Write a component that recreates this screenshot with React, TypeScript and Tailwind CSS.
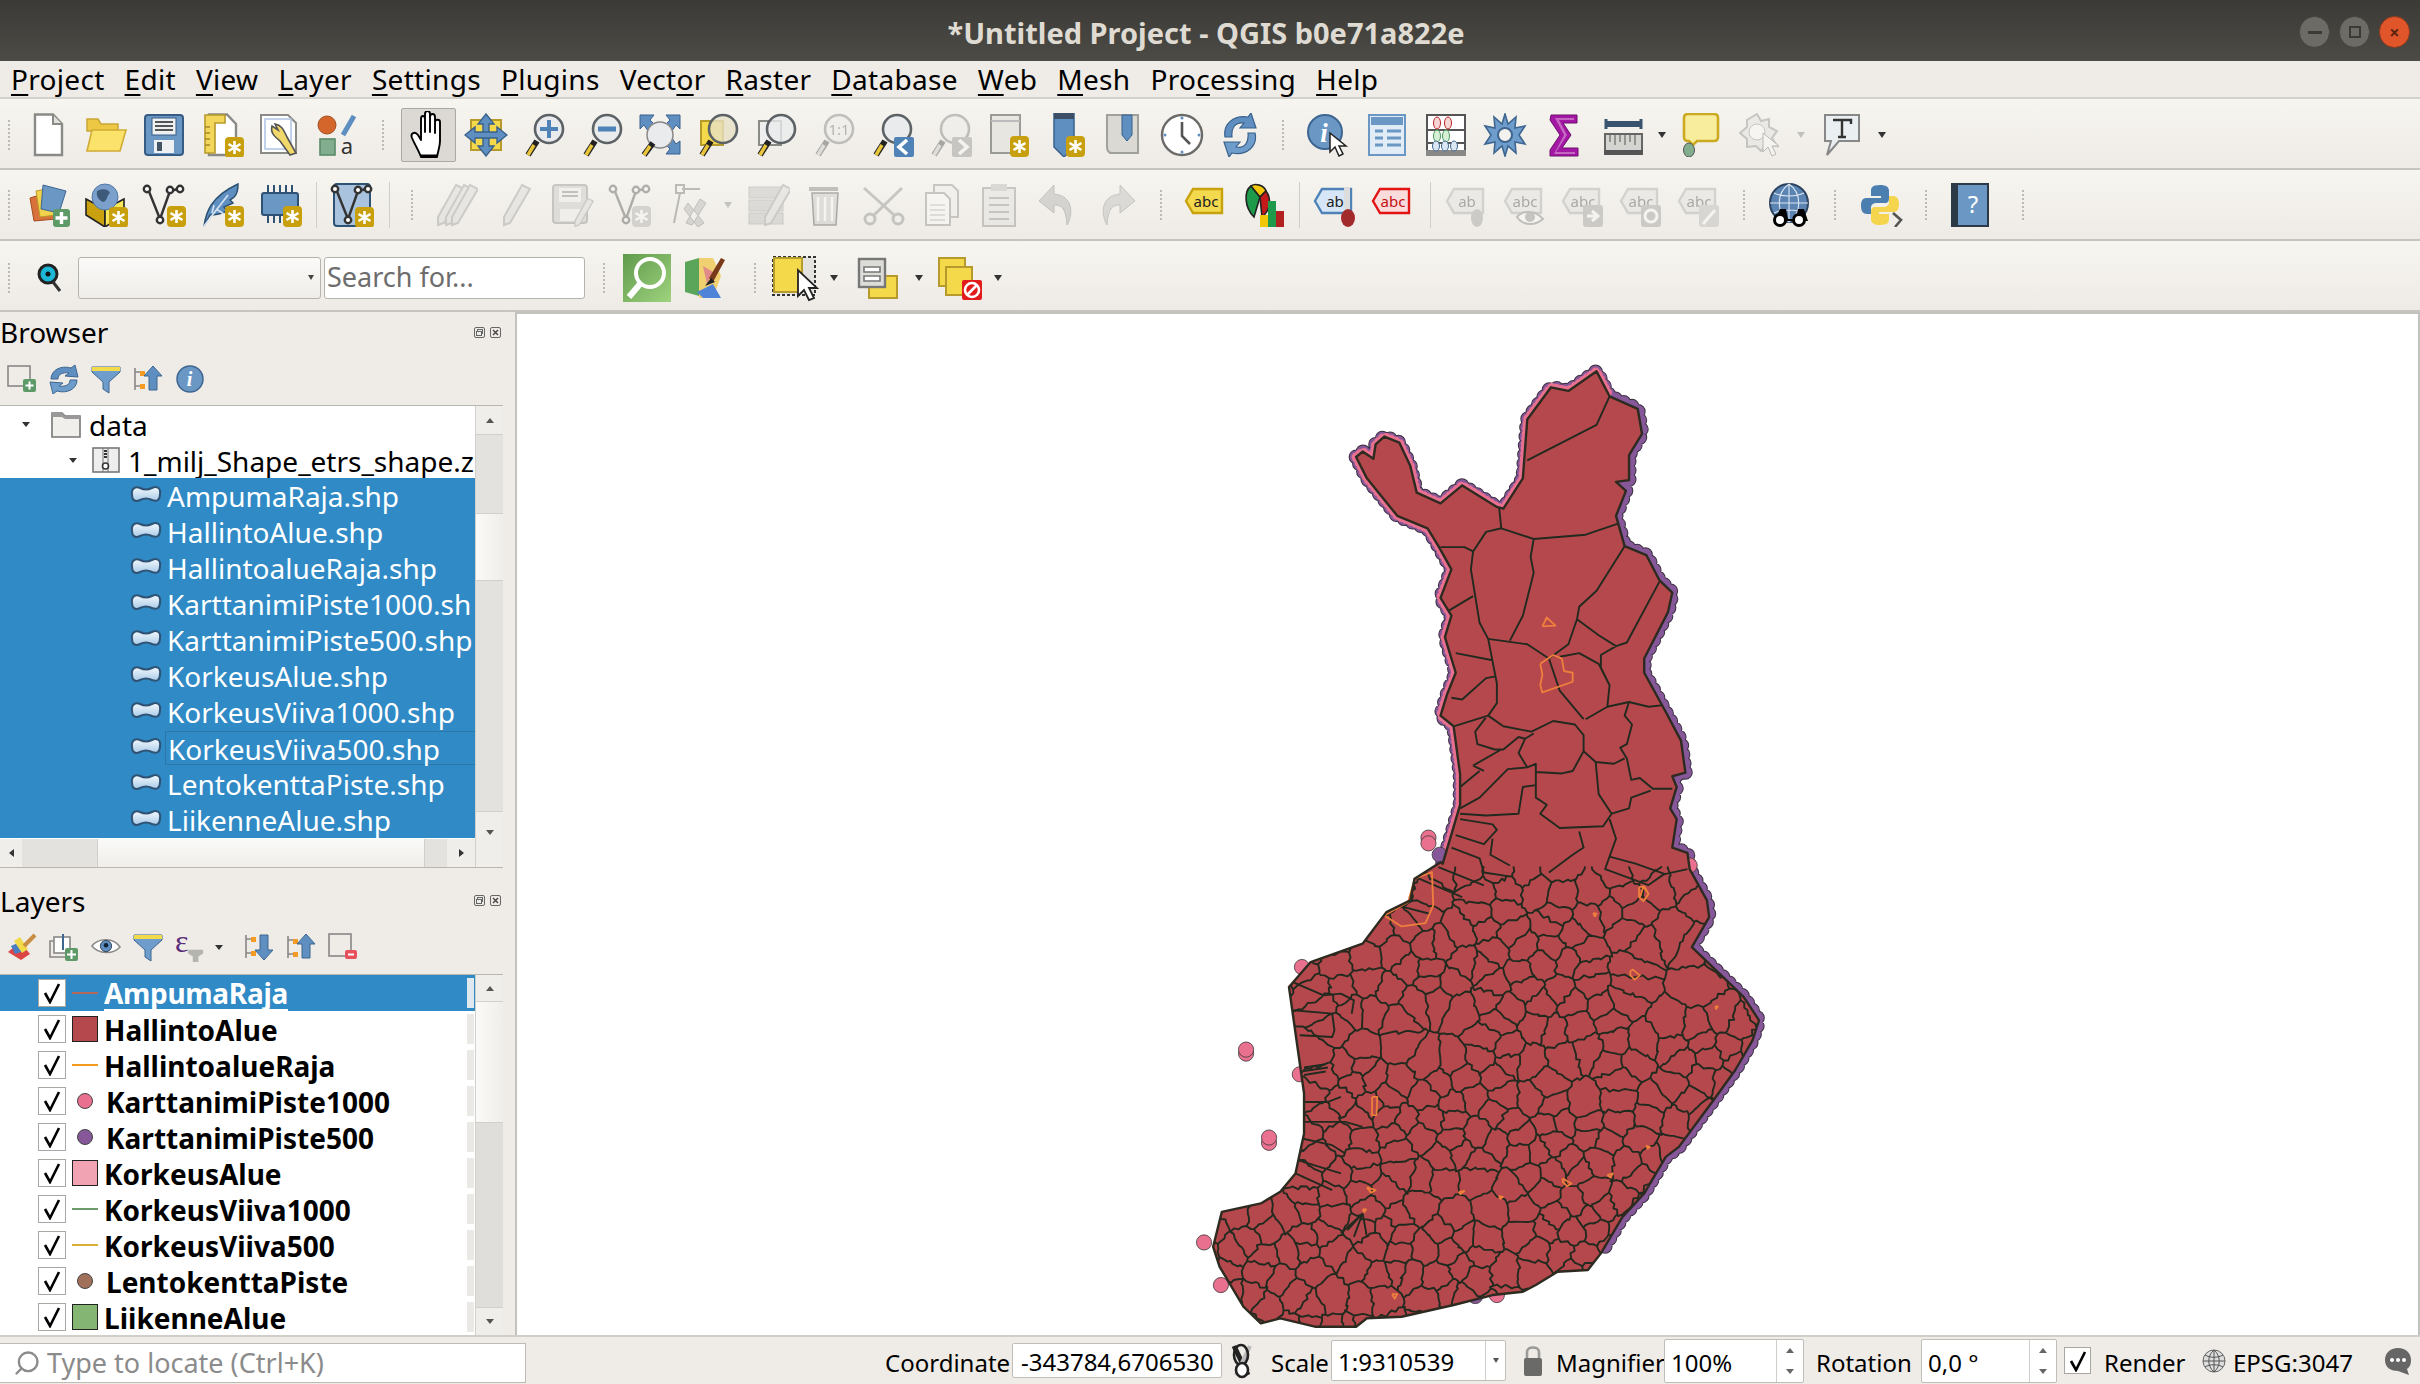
import { Search } from 'lucide-react'
import type { ReactNode } from 'react'

type Pt = [number, number]

// map traces were read off two zoomed crops, these put them back on page coordinates
const z6 = (x: number, y: number): Pt => [1150 + x / 2.306, 340 + y / 2.8]
const z7 = (x: number, y: number): Pt => [1150 + x / 2.306, 840 + y / 3]
const pts6 = (a: number[]) => { const o: Pt[] = []; for (let i = 0; i < a.length; i += 2) o.push(z6(a[i], a[i + 1])); return o }
const pts7 = (a: number[]) => { const o: Pt[] = []; for (let i = 0; i < a.length; i += 2) o.push(z7(a[i], a[i + 1])); return o }
const toD = (p: Pt[], close = false) => 'M' + p.map(q => q[0].toFixed(1) + ' ' + q[1].toFixed(1)).join('L') + (close ? 'Z' : '')

const coastNorthEast = [
  ...pts6([475,325,490,310,515,330,520,290,540,268,575,285,600,350,615,425,670,455,720,405,800,465,815,470,860,385,870,220,925,130,965,140,1030,85,1060,155,1125,190,1135,260,1105,320,1105,390,1075,395,1098,420,1075,490,1095,575,1145,600,1175,670,1205,705,1195,760,1140,890,1140,930,1190,1040,1225,1120,1235,1210,1205,1220,1215,1250,1200,1310,1215,1340,1205,1420,1240,1435,1245,1480]),
  ...pts7([1285,180,1290,230,1250,320,1330,420,1370,470,1405,540,1390,600,1350,690,1300,780,1220,920,1190,950,1140,1060,1090,1130,1040,1240]),
]
const coastSouth = pts7([1010,1290,940,1295,890,1335,860,1355,790,1365,700,1395,580,1430,500,1435,475,1460,380,1460,300,1435,255,1450,215,1400,160,1280,145,1220,165,1115,255,1090,300,1055,335,1000,355,880,355,760,320,440,370,365,490,310,545,215,600,180,610,115,670,65])
const coastWest = pts6([675,1465,715,1300,715,1215,700,1080,670,1050,685,990,705,930,680,830,695,770,670,720,695,640,665,575,640,525,570,490,500,385,475,325])
const outline = toD([...coastNorthEast, ...coastSouth, ...coastWest], true)

const northLines = [
  [870,335,1030,235,1060,155],
  [805,465,810,525,885,555,1005,543,1080,512],
  [810,525,775,535,745,590,725,578,670,578],
  [885,555,878,605,885,650,860,770,830,840],
  [745,590,740,640,760,790,780,835,800,960,800,1015,780,1050,700,1080],
  [780,835,870,850,920,890,945,980,1000,1060],
  [1095,575,1030,700,990,745,985,780,965,850,920,890],
  [985,780,1035,825,1075,855,1100,845,1175,675],
  [945,885,990,875,1035,905,1060,965,1055,1025],
  [1075,855,1040,880,1040,915,1060,965],
  [1055,1025,1105,1012,1150,1025,1190,1020],
  [1005,1060,1055,1025],
  [690,755,745,715],
  [705,875,790,895],
  [695,1000,720,1005,775,945,797,940],
  [780,1050,815,1080,880,1095,930,1065,980,1075,1000,1105,1000,1150,975,1205,950,1212,890,1208],
  [1105,1012,1095,1050,1112,1075,1100,1130,1085,1140,1100,1170,1110,1230,1130,1225,1160,1255,1205,1255],
  [1000,1150,1028,1180,1070,1185,1095,1170],
  [1028,1180,1035,1270,1065,1325,1105,1310,1110,1280,1155,1260],
  [775,1055,750,1095,755,1130,795,1145,815,1145,850,1110,865,1115,885,1100],
  [865,1115,850,1155,870,1195,890,1185,890,1280,915,1300,900,1325,945,1365,1045,1360,1065,1325],
  [745,1190,810,1145],
  [870,1195,825,1200,760,1280,715,1310],
  [760,1205,715,1250],
  [745,1190,770,1205],
  [715,1325,775,1330,850,1325,860,1250,890,1245],
  [715,1340,790,1355,800,1370,770,1410,705,1385],
  [1060,1340,1075,1395,1060,1445,1120,1465,1190,1495],
  [990,1375,1000,1420,975,1440,920,1490],
  [1060,1445,1050,1480,1150,1525,1185,1495,1240,1480],
  [695,1420,760,1450,770,1490,825,1500],
  [790,1395,785,1440,830,1470],
].map(l => toD(pts6(l))).join('')

const southLines = [
  [320,420,400,465,440,460,470,480,465,520],
  [330,510,420,520,425,570,420,590,345,585],
  [355,682,405,672],[355,692,410,682],[355,704,405,694],
  [355,785,410,785,440,770],
  [355,845,450,845,490,860],
  [350,895,420,915,450,940],
  [340,960,440,1000],
  [335,1000,420,1050],
  [490,1120,440,1180],[490,1120,470,1190],[490,1120,500,1190],[490,1120,455,1170],
  [665,80,770,135],[620,115,720,170],[585,200,645,220],
].map(l => toD(pts7(l))).join('')

const orangeLines = [
  ...[[905,800,915,775,935,798,905,800],[900,905,930,880,950,890,955,925,975,930,975,955,905,985,900,965,905,935,900,905],[1130,1560,1138,1530,1150,1550,1140,1568]].map(l => toD(pts6(l))),
  ...[[540,225,580,258,635,248,653,195,650,95,610,115,595,185,540,225],[512,770,524,770,522,825,512,825,512,770],[1128,140,1140,138,1150,160,1138,182,1128,170,1128,140],[1108,392,1114,388,1130,405,1118,418,1108,405,1108,392],[952,1015,972,1030,962,1038,952,1025,952,1015],[500,1042,520,1050,510,1058,500,1042],[1055,1005,1068,1000,1062,1012,1055,1005],[712,1055,725,1052,716,1062,712,1055],[490,1108,498,1108,494,1116,490,1108],[558,1362,570,1362,564,1376,558,1362],[805,1068,814,1070,808,1076,805,1068],[1022,218,1030,220,1026,228,1022,218],[1145,916,1153,920,1148,926,1145,916],[1304,498,1310,498,1306,506,1304,498]].map(l => toD(pts7(l))),
].join('')

// municipalities in the south are too many to trace, so a seeded voronoi stands in for them
function buildMesh() {
  let seed = 4711
  const rnd = () => { seed = (seed * 1664525 + 1013904223) >>> 0; return seed / 4294967296 }
  const sites: Pt[] = []
  let row = 0
  for (let y = 872; y < 1335; y += y > 1255 ? 30 : 19) {
    for (let x = 1205 + (row % 2) * 13; x < 1775; x += y > 1255 ? 22 : 27) {
      if (x < 1312 && y > 985 && y < 1185) continue
      if (x > 1640 && y < 1010 && rnd() < 0.5) continue
      if (rnd() < 0.14) continue
      sites.push([x + (rnd() - 0.5) * 18, y + (rnd() - 0.5) * 13])
    }
    row++
  }
  const seen = new Set<string>()
  let d = ''
  const key = (p: Pt) => Math.round(p[0] * 2) + ',' + Math.round(p[1] * 2)
  for (const s of sites) {
    let poly: Pt[] = [[1190, 866], [1790, 866], [1790, 1345], [1190, 1345]]
    for (const o of sites) {
      if (o === s || Math.abs(o[0] - s[0]) > 110 || Math.abs(o[1] - s[1]) > 110) continue
      const mx = (s[0] + o[0]) / 2, my = (s[1] + o[1]) / 2, nx = o[0] - s[0], ny = o[1] - s[1]
      const next: Pt[] = []
      for (let i = 0; i < poly.length; i++) {
        const a = poly[i], b = poly[(i + 1) % poly.length]
        const da = (a[0] - mx) * nx + (a[1] - my) * ny, db = (b[0] - mx) * nx + (b[1] - my) * ny
        if (da <= 0) next.push(a)
        if (da * db < 0) { const t = da / (da - db); next.push([a[0] + (b[0] - a[0]) * t, a[1] + (b[1] - a[1]) * t]) }
      }
      poly = next
      if (!poly.length) break
    }
    for (let i = 0; i < poly.length; i++) {
      const a = poly[i], b = poly[(i + 1) % poly.length]
      if (a[1] < 867 && b[1] < 867) continue
      const k = [key(a), key(b)].sort().join('|')
      if (seen.has(k)) continue
      seen.add(k)
      // roughen the edge so it reads as a border and not a straight cell wall
      const len = Math.hypot(b[0] - a[0], b[1] - a[1])
      const steps = Math.max(2, Math.round(len / 4))
      d += `M${a[0].toFixed(1)} ${a[1].toFixed(1)}`
      for (let t = 1; t < steps; t++) {
        const f = t / steps
        d += `L${(a[0] + (b[0] - a[0]) * f + (rnd() - 0.5) * 4).toFixed(1)} ${(a[1] + (b[1] - a[1]) * f + (rnd() - 0.5) * 4).toFixed(1)}`
      }
      d += `L${b[0].toFixed(1)} ${b[1].toFixed(1)}`
    }
  }
  return d
}
const meshD = buildMesh()

const pinkDots: Pt[] = [z7(221,640), z7(221,628), z7(274,908), z7(274,892), z7(124,1207), z7(163,1335), z7(350,380), z7(345,702), z6(642,1392), z6(642,1408), z7(800,1365), z7(1245,75)]
const purpleDots: Pt[] = [z6(668,1440), z7(750,1368)]

function FinlandMap() {
  return (
    <svg viewBox="517 313 1901 1022" className="block w-full h-full">
      <defs>
        <clipPath id="fi"><path d={outline} /></clipPath>
      </defs>
      <path d={toD(coastNorthEast)} fill="none" stroke="#3c3140" strokeWidth="15" strokeLinecap="round" strokeDasharray="0 9" />
      <path d={toD(coastWest)} fill="none" stroke="#3c3140" strokeWidth="15" strokeLinecap="round" strokeDasharray="0 9" />
      <path d={toD(coastNorthEast)} fill="none" stroke="#86589a" strokeWidth="13" strokeLinecap="round" strokeDasharray="0 9" />
      <path d={toD(coastWest)} fill="none" stroke="#86589a" strokeWidth="13" strokeLinecap="round" strokeDasharray="0 9" />
      <path d={toD(coastWest)} fill="none" stroke="#e9708f" strokeWidth="9" strokeLinecap="round" strokeDasharray="0 5" />
      <path d={toD(coastNorthEast.slice(0, 18))} fill="none" stroke="#e9708f" strokeWidth="9" strokeLinecap="round" strokeDasharray="0 5" />
      {pinkDots.map((p, i) => <circle key={i} cx={p[0]} cy={p[1]} r="7.6" fill="#e9708f" stroke="#3a3a3a" strokeWidth="0.8" />)}
      {purpleDots.map((p, i) => <circle key={i} cx={p[0]} cy={p[1]} r="7.6" fill="#86589a" stroke="#3a3a3a" strokeWidth="0.8" />)}
      <path d={outline} fill="#b5484c" />
      <g clipPath="url(#fi)">
        <path d={meshD} fill="none" stroke="#22291f" strokeWidth="1.9" strokeLinejoin="round" />
        <path d={southLines} fill="none" stroke="#22291f" strokeWidth="1.9" strokeLinejoin="round" />
        <path d={northLines} fill="none" stroke="#22291f" strokeWidth="1.9" strokeLinejoin="round" />
      </g>
      <path d={orangeLines} fill="none" stroke="#ee7f3c" strokeWidth="1.8" strokeLinejoin="round" />
      <path d={outline} fill="none" stroke="#2d2a20" strokeWidth="2.4" strokeLinejoin="round" />
    </svg>
  )
}

function Ico({ children, off }: { children: ReactNode; off?: boolean }) {
  return <svg viewBox="0 0 44 44" width="44" height="44" className={off ? 'opacity-35 grayscale' : ''}>{children}</svg>
}

const Star = ({ x = 24, y = 23 }: { x?: number; y?: number }) => (
  <g>
    <rect x={x} y={y} width="19" height="21" rx="4" fill="#c8a00d" />
    <path d={`M${x + 9.5} ${y + 4}v13M${x + 3.5} ${y + 7}l12 7M${x + 15.5} ${y + 7}l-12 7`} stroke="#fff" strokeWidth="2.6" />
  </g>
)

const Lens = ({ fill = '#e9ebec' }: { fill?: string }) => (
  <g>
    <path d="M6 42 L15 28" stroke="#222" strokeWidth="6" />
    <path d="M6 42 L12 32" stroke="#e8c53a" strokeWidth="3.5" />
    <circle cx="27" cy="16" r="14" fill={fill} stroke="#5c6266" strokeWidth="2.6" />
  </g>
)

const Page = () => <path d="M9 1.5H27L36 11V42H9Z" fill="#fff" stroke="#8a8a86" strokeWidth="2.4" />
const BluePlus = () => <path d="M27 7v18M18 16h18" stroke="#4f83b8" strokeWidth="4" />

const Abc = ({ label = 'abc', fill = '#f2d94e', stroke = '#c8a20d', color = '#222' }: { label?: string; fill?: string; stroke?: string; color?: string }) => (
  <g>
    <path d="M2 18L9 6H38V30H9Z" fill={fill} stroke={stroke} strokeWidth="2.4" />
    <text x="22" y="24" textAnchor="middle" fontFamily="Noto Sans" fontSize="15" fill={color}>{label}</text>
  </g>
)

const Pencil = ({ x = 0, y = 0 }: { x?: number; y?: number }) => (
  <path transform={`translate(${x} ${y})`} d="M28 2L36 6L16 40L10 42L10 34Z" fill="#d8d4c8" stroke="#8a8880" strokeWidth="2" />
)

const Nodes = () => (
  <g fill="#fff" stroke="#333" strokeWidth="2.4">
    <path d="M6 6L18 36L28 8" fill="none" />
    <path d="M28 8L36 6" fill="none" />
    <circle cx="5" cy="6" r="3.2" /><circle cx="18" cy="37" r="3.2" /><circle cx="28" cy="7" r="3.2" /><circle cx="38" cy="6" r="3.2" />
  </g>
)

const arrows = (
  <g fill="#5e8fc0" stroke="#39618c" strokeWidth="1.4">
    <path d="M22 1L30 11H25V33H30L22 43L14 33H19V11H14Z" />
    <path d="M1 22L11 14V19H33V14L43 22L33 30V25H11V30Z" />
  </g>
)

const iconsTop: ReactNode[] = [
  <Ico key="new"><Page /><path d="M27 2V11H36" fill="#e0e0dc" stroke="#8a8a86" strokeWidth="2" /></Ico>,
  <Ico key="open"><path d="M3 6H14L17 11H34V18H3Z" fill="#edc845" stroke="#c9a737" strokeWidth="1.5" /><path d="M8 17H42L36 38H3Z" fill="#fbe26a" stroke="#d0ab35" strokeWidth="1.6" /></Ico>,
  <Ico key="save"><rect x="3" y="2" width="38" height="40" rx="3" fill="#6b97c4" stroke="#365c85" strokeWidth="2" /><rect x="10" y="5" width="24" height="17" fill="#eef0f1" stroke="#365c85" /><path d="M13 9h18M13 13h18M13 17h18" stroke="#555" strokeWidth="2" /><rect x="12" y="27" width="20" height="13" fill="#eef0f1" /><rect x="15" y="29" width="5" height="9" fill="#456" /></Ico>,
  <Ico key="layout"><Page /><path d="M5 2H25V10H15V40H5Z" fill="#f3d65c" stroke="#b79a2c" strokeWidth="1.6" /><path d="M5 14h5M5 20h5M5 26h5M5 32h5" stroke="#a8892a" strokeWidth="1.4" /><Star x={25} y={24} /></Ico>,
  <Ico key="manager"><path d="M3 2H30L38 10V40H3Z" fill="#fff" stroke="#8a8a86" strokeWidth="2" /><rect x="7" y="6" width="26" height="30" fill="none" stroke="#b5c7e6" strokeWidth="1.6" /><path d="M14 13C12 20 17 24 22 28L32 42L38 40L29 24C26 18 24 12 17 11L20 17L14 13Z" fill="#f1d86a" stroke="#555" strokeWidth="1.6" /></Ico>,
  <Ico key="style"><circle cx="11" cy="12" r="9" fill="#d4662c" stroke="#a44d20" /><path d="M27 22L38 3" stroke="#5e8fc0" strokeWidth="5" /><rect x="4" y="26" width="15" height="16" fill="#82ad8e" stroke="#5a8a68" strokeWidth="1.6" /><text x="31" y="41" textAnchor="middle" fontFamily="Noto Sans" fontSize="22" fill="#333">a</text></Ico>,
]

const iconsNav: ReactNode[] = [
  <Ico key="pansel"><rect x="7" y="7" width="30" height="30" fill="#f4d94a" stroke="#b79a2c" strokeWidth="2" />{arrows}</Ico>,
  <Ico key="in"><Lens /><BluePlus /></Ico>,
  <Ico key="out"><Lens /><path d="M18 16h18" stroke="#4f83b8" strokeWidth="5" /></Ico>,
  <Ico key="full"><g fill="#5e8fc0" stroke="#39618c"><path d="M2 2H16L12 7L17 12L10 18L6 12L2 16Z" /><path d="M42 2H28L32 7L27 12L34 18L38 12L42 16Z" /><path d="M42 41H28L32 36L27 31L34 25L38 31L42 28Z" /></g><circle cx="22" cy="22" r="13" fill="#e9ebec" stroke="#888" strokeWidth="1.5" /><path d="M6 42 L15 30" stroke="#222" strokeWidth="6" /><path d="M6 42 L12 33" stroke="#e8c53a" strokeWidth="3.5" /></Ico>,
  <Ico key="zsel"><rect x="5" y="8" width="22" height="24" fill="#f4d94a" stroke="#b79a2c" strokeWidth="2" /><Lens fill="#e6e0c4cc" /></Ico>,
  <Ico key="zlay"><rect x="5" y="8" width="22" height="24" fill="#eee" stroke="#8a8a86" strokeWidth="2" /><Lens fill="#e9ebeccc" /></Ico>,
  <Ico key="znat" off><Lens /><text x="27" y="22" textAnchor="middle" fontFamily="Noto Sans" fontSize="15" fill="#444">1:1</text></Ico>,
  <Ico key="zlast"><Lens /><rect x="24" y="24" width="20" height="20" rx="2" fill="#4f83b8" /><path d="M37 27L29 34L37 41" fill="none" stroke="#fff" strokeWidth="3.6" /></Ico>,
  <Ico key="znext" off><Lens /><rect x="24" y="24" width="20" height="20" rx="2" fill="#4f83b8" /><path d="M31 27L39 34L31 41" fill="none" stroke="#fff" strokeWidth="3.6" /></Ico>,
  <Ico key="newview"><path d="M5 2H34V40H5Z" fill="#e8e6e0" stroke="#9a9a96" strokeWidth="2" /><path d="M5 8H34" stroke="#bbb" strokeWidth="2" /><Star /></Ico>,
  <Ico key="newbm"><path d="M10 0H30V34L20 44L10 34Z" fill="#5e8fc0" stroke="#39618c" strokeWidth="1.5" /><path d="M10 0H30V6H10Z" fill="#3c4f66" /><Star x={22} y={23} /></Ico>,
  <Ico key="showbm"><path d="M5 2H36V40H10C5 40 5 34 5 34Z" fill="#dbd9d3" stroke="#a0a09c" strokeWidth="2" /><path d="M20 2H30V22L25 28L20 22Z" fill="#5e8fc0" stroke="#39618c" /></Ico>,
  <Ico key="clock"><circle cx="22" cy="22" r="20" fill="#fff" stroke="#6a6a68" strokeWidth="2.4" /><path d="M22 9V23L30 31" fill="none" stroke="#555" strokeWidth="2.6" /><g fill="#5e8fc0"><circle cx="22" cy="5" r="1.5" /><circle cx="39" cy="22" r="1.5" /><circle cx="22" cy="39" r="1.5" /><circle cx="5" cy="22" r="1.5" /></g></Ico>,
  <Ico key="refresh"><path d="M7 24C5 11 15 2 30 4L33 0L38 15L22 15L26 10C17 9 13 15 14 24Z" fill="#5e8fc0" stroke="#39618c" strokeWidth="1.2" /><path d="M37 20C40 33 29 43 14 40L11 44L6 29L22 29L18 34C27 36 31 29 30 20Z" fill="#6f9dcb" stroke="#39618c" strokeWidth="1.2" /></Ico>,
]

const iconsAttr: ReactNode[] = [
  <Ico key="id"><circle cx="19" cy="19" r="17" fill="#6b97c4" stroke="#3d6690" strokeWidth="2" /><text x="18" y="29" textAnchor="middle" fontFamily="Liberation Serif" fontStyle="italic" fontWeight="700" fontSize="27" fill="#fff">i</text><path d="M24 20V39L29 34L33 43L37 41L33 33H40Z" fill="#fff" stroke="#222" strokeWidth="1.5" /></Ico>,
  <Ico key="attr"><rect x="4" y="2" width="36" height="40" fill="#e1ecf6" stroke="#6b97c4" strokeWidth="2" /><rect x="6" y="4" width="32" height="8" fill="#6b97c4" /><path d="M10 18h8M22 18h14M10 25h8M22 25h14M10 32h8M22 32h14" stroke="#6b97c4" strokeWidth="3" /></Ico>,
  <Ico key="abacus"><rect x="3" y="2" width="38" height="40" fill="#fff" stroke="#555" strokeWidth="2" /><path d="M2 17H42M2 30H42" stroke="#555" strokeWidth="2" /><rect x="2" y="37" width="40" height="6" fill="#888" /><g fill="#f7d6d6" stroke="#b22"><ellipse cx="13" cy="10" rx="3.5" ry="6" /><ellipse cx="24" cy="10" rx="3.5" ry="6" /></g><g fill="#d6f0d6" stroke="#4a9a5a"><ellipse cx="13" cy="23" rx="3.5" ry="6" /><ellipse cx="22" cy="23" rx="3.5" ry="6" /></g><g fill="#dbe6f3" stroke="#3d6690"><ellipse cx="12" cy="33" rx="3.5" ry="5" /><ellipse cx="21" cy="33" rx="3.5" ry="5" /><ellipse cx="30" cy="33" rx="3.5" ry="5" /></g></Ico>,
  <Ico key="gear"><path d="M22 1L25 11L33 4L32 15L42 13L36 22L42 31L32 29L33 40L25 33L22 43L19 33L11 40L12 29L2 31L8 22L2 13L12 15L11 4L19 11Z" fill="#6f9dcb" stroke="#3d6690" strokeWidth="1.6" /><circle cx="22" cy="22" r="7" fill="#f4f2ee" stroke="#3d6690" strokeWidth="2" /></Ico>,
  <Ico key="sum"><path d="M9 2H35V10H21L29 22L20 35H36V43H8V37L18 22L8 7Z" fill="#a416a4" stroke="#6d0e6d" strokeWidth="1" /><path d="M13 5H32V7H17L25 22L14 39H33V41H12L22 22Z" fill="#fff" opacity="0.35" /></Ico>,
  <Ico key="measure"><path d="M5 6V16M40 6V16M5 11H40" stroke="#39536e" strokeWidth="3" /><path d="M6 11H39" stroke="#39536e" strokeWidth="6" /><rect x="4" y="21" width="37" height="20" fill="#d4d4d0" stroke="#666" strokeWidth="2" /><path d="M9 22v7M14 22v10M19 22v7M24 22v10M29 22v7M34 22v10" stroke="#555" /><rect x="3" y="37" width="39" height="5" fill="#555" /></Ico>,
  <Ico key="tip"><path d="M6 1H34Q38 1 38 5V24Q38 28 34 28H17L13 32L9 28H8Q4 28 4 24V5Q4 1 8 1Z" fill="#f8ed9d" stroke="#cba920" strokeWidth="2.6" /><ellipse cx="9" cy="37" rx="5.5" ry="7" fill="#82ad8e" stroke="#555" /></Ico>,
  <Ico key="run" off><path d="M18 1L22 8L30 6L30 14L38 18L33 25L38 33L28 31L22 38L17 33L8 34L8 26L1 20L8 14L8 7Z" fill="#ddd" stroke="#777" strokeWidth="2" /><circle cx="18" cy="19" r="8" fill="#fff" stroke="#777" /><path d="M24 20V39L29 34L33 43L37 41L33 33H40Z" fill="#fff" stroke="#555" /></Ico>,
]

const iconsLeft: ReactNode[] = [
  <Ico key="dsm"><path d="M4 15L20 10L30 36L8 38Z" fill="#d8713a" stroke="#a44d20" /><path d="M10 8L26 5L30 32L14 34Z" fill="#f1d24a" stroke="#b79a2c" /><path d="M17 2L40 8L33 30L15 26Z" fill="#6b97c4" stroke="#3d6690" /><rect x="27" y="26" width="17" height="18" rx="3" fill="#5d9a68" /><path d="M35.5 29v12M29.5 35h12" stroke="#fff" strokeWidth="3.4" /></Ico>,
  <Ico key="gpkg"><path d="M2 16L21 26V44L2 32Z" fill="#c9a10f" stroke="#222" strokeWidth="1.6" /><path d="M40 16L21 26V44L40 32Z" fill="#f8e75a" stroke="#222" strokeWidth="1.6" /><circle cx="21" cy="14" r="13" fill="#7aa0cb" stroke="#5279a6" /><path d="M13 8C18 5 25 6 26 10C22 13 24 18 19 19C15 17 12 14 13 8Z" fill="#3e5a7a" /><Star x={25} y={24} /></Ico>,
  <Ico key="line"><Nodes /><Star x={25} y={23} /></Ico>,
  <Ico key="quill"><path d="M4 43C6 30 10 14 38 1C38 12 34 15 30 17L33 20L24 24L27 28C19 32 14 32 10 32Z" fill="#5e8fc0" stroke="#2e5273" strokeWidth="1.5" /><path d="M4 43L28 12M16 26l8 5M14 22l-2 8" stroke="#d6e4f1" strokeWidth="1.6" /><Star x={25} y={23} /></Ico>,
  <Ico key="chip"><path d="M10 2v8M16 2v8M22 2v8M28 2v8M34 2v8M10 30v10M16 30v10M22 30v10" stroke="#2e5273" strokeWidth="2" /><rect x="4" y="10" width="36" height="22" rx="2" fill="#6b97c4" stroke="#2e5273" strokeWidth="2" /><Star x={25} y={23} /></Ico>,
]

const iconsEdit: ReactNode[] = [
  <Ico key="e1" off><Pencil x={-6} /><Pencil x={2} /><Pencil x={8} /></Ico>,
  <Ico key="e2" off><Pencil x={2} /></Ico>,
  <Ico key="e3" off><rect x="3" y="2" width="34" height="38" rx="3" fill="#bbb" stroke="#777" strokeWidth="2" /><rect x="9" y="5" width="22" height="14" fill="#eee" /><path d="M12 9h16M12 13h16" stroke="#666" strokeWidth="2" /><rect x="10" y="26" width="20" height="12" fill="#eee" /><g transform="translate(18 14) scale(.7)"><Pencil /></g></Ico>,
  <Ico key="e4" off><Nodes /><Star x={24} y={23} /></Ico>,
]
const iconsEdit2: ReactNode[] = [
  <Ico key="e6" off><rect x="3" y="4" width="34" height="11" fill="#b8b4a0" stroke="#888" /><rect x="3" y="17" width="34" height="11" fill="#b8b4a0" stroke="#888" /><rect x="3" y="30" width="34" height="11" fill="#b8b4a0" stroke="#888" /><Pencil x={9} /></Ico>,
  <Ico key="e7" off><path d="M5 4H34V8H5Z" fill="#c46" /><path d="M8 10H34L32 42H10Z" fill="#c9b8b8" stroke="#a04" strokeWidth="1.5" /><path d="M14 14V38M21 14V38M28 14V38" stroke="#fff" strokeWidth="2.4" /></Ico>,
  <Ico key="e8" off><path d="M2 5L32 32M40 5L12 32" stroke="#777" strokeWidth="3" /><circle cx="8" cy="36" r="5" fill="none" stroke="#777" strokeWidth="3" /><circle cx="36" cy="36" r="5" fill="none" stroke="#777" strokeWidth="3" /></Ico>,
  <Ico key="e9" off><path d="M14 2H32L38 8V34H14Z" fill="#eee" stroke="#777" strokeWidth="2" /><path d="M6 10H24L30 16V42H6Z" fill="#fff" stroke="#777" strokeWidth="2" /><path d="M10 22h15M10 27h15M10 32h15M10 37h15" stroke="#777" /></Ico>,
  <Ico key="e10" off><rect x="5" y="5" width="32" height="38" fill="#ddd" stroke="#777" strokeWidth="2" /><rect x="13" y="1" width="16" height="7" fill="#aaa" /><path d="M11 15H31M11 22H31M11 29H31M11 36H31" stroke="#777" strokeWidth="2" /></Ico>,
  <Ico key="e11" off><path d="M18 2L3 18L18 30V22C26 22 30 26 31 42C37 32 38 13 18 11Z" fill="#b89a84" stroke="#766" /></Ico>,
  <Ico key="e12" off><path d="M26 2L41 18L26 30V22C18 22 14 26 13 42C7 32 6 13 26 11Z" fill="#a9b3a9" stroke="#676" /></Ico>,
]

const iconsLabel: ReactNode[] = [
  <Ico key="l1"><Abc /></Ico>,
  <Ico key="l2"><path d="M9 3C2 8 2 24 12 34L18 14Z" fill="#1f9a4a" stroke="#222" strokeWidth="1.6" /><path d="M9 3C13 0 22 2 24 8L18 14Z" fill="#f2c70a" stroke="#222" strokeWidth="1.6" /><path d="M24 8C30 16 28 28 20 34L18 14Z" fill="#c51a1a" stroke="#222" strokeWidth="1.6" /><rect x="18" y="32" width="8" height="12" fill="#f2c70a" /><rect x="26" y="18" width="8" height="26" fill="#1f9a4a" /><rect x="34" y="28" width="8" height="16" fill="#b32020" /></Ico>,
]
const iconsLabel2: ReactNode[] = [
  <Ico key="l3"><Abc label="ab" fill="#d6e6f6" stroke="#4f83b8" /><path d="M34 4V26" stroke="#ddd" strokeWidth="6" /><ellipse cx="35" cy="35" rx="7" ry="9" fill="#a32a2a" /></Ico>,
  <Ico key="l4"><Abc fill="#fbdcdc" stroke="#e21414" color="#c21010" /></Ico>,
]
const iconsLabelOff: ReactNode[] = [
  <Ico key="l5" off><Abc label="ab" fill="#ddd" stroke="#999" /><ellipse cx="32" cy="35" rx="6" ry="9" fill="#c77" /></Ico>,
  <Ico key="l6" off><Abc fill="#ddd" stroke="#999" /><path d="M14 34C20 27 32 27 40 36C32 43 20 43 14 34Z" fill="#fff" stroke="#666" strokeWidth="2" /><circle cx="27" cy="34" r="5" fill="#777" /></Ico>,
  <Ico key="l7" off><Abc fill="#ddd" stroke="#999" /><rect x="22" y="22" width="20" height="22" rx="3" fill="#888" /><path d="M26 33H34M31 28L37 33L31 38" fill="none" stroke="#fff" strokeWidth="3" /></Ico>,
  <Ico key="l8" off><Abc fill="#ddd" stroke="#999" /><rect x="22" y="22" width="20" height="22" rx="3" fill="#888" /><circle cx="32" cy="33" r="6" fill="none" stroke="#fff" strokeWidth="3" /></Ico>,
  <Ico key="l9" off><Abc fill="#ddd" stroke="#999" /><rect x="22" y="22" width="20" height="22" rx="3" fill="#aaa" /><path d="M26 41L38 27" stroke="#fff" strokeWidth="3" /></Ico>,
]

const GlobeBin = () => (
  <Ico>
    <circle cx="21" cy="20" r="19" fill="#5b84b3" stroke="#2c4460" strokeWidth="2" />
    <path d="M21 1V39M2 20H40M6 10C14 14 28 14 36 10M6 30C14 26 28 26 36 30M21 1C8 10 8 30 21 39M21 1C34 10 34 30 21 39" fill="none" stroke="#dbe6f2" strokeWidth="1.1" />
    <path d="M12 26H18L20 36H28L30 26H36L40 38H6Z" fill="#000" />
    <circle cx="12" cy="37" r="5.5" fill="#fff" stroke="#000" strokeWidth="3" />
    <circle cx="31" cy="37" r="5.5" fill="#fff" stroke="#000" strokeWidth="3" />
  </Ico>
)
const Python = () => (
  <Ico>
    <path d="M21 2C13 2 12 5 12 8V13H22V15H7C3 15 2 19 2 23C2 28 4 31 8 31H12V25C12 21 15 20 18 20H26C29 20 30 18 30 15V8C30 4 27 2 21 2Z" fill="#4a7fb0" />
    <path d="M21 42C29 42 30 39 30 36V31H20V29H35C39 29 40 25 40 21C40 16 38 13 34 13H30V19C30 23 27 24 24 24H16C13 24 12 26 12 29V36C12 40 15 42 21 42Z" fill="#f5d54e" />
    <path d="M34 30L42 37L36 44" fill="none" stroke="#555" strokeWidth="2.6" />
  </Ico>
)
const HelpBook = () => (
  <Ico>
    <rect x="3" y="1" width="36" height="42" fill="#6b97c4" stroke="#2c3a48" strokeWidth="2" />
    <rect x="3" y="1" width="6" height="42" fill="#2c3a48" />
    <text x="24" y="30" textAnchor="middle" fontFamily="Noto Sans" fontSize="24" fill="#fff">?</text>
  </Ico>
)

const Slot = ({ children, wide }: { children: ReactNode; wide?: boolean }) => (
  <div className={`${wide ? 'w-[59px]' : 'w-[58px]'} shrink-0 flex justify-center`}>{children}</div>
)
const Grip = ({ w }: { w: string }) => (
  <div className={`${w} shrink-0 flex justify-center`}><div className="w-[3px] h-[30px] border-l-2 border-dotted border-[#bdbab4]" /></div>
)
const Sep = ({ w }: { w: string }) => (
  <div className={`${w} shrink-0 flex justify-center`}><div className="w-px h-[46px] bg-[#d0cec9]" /></div>
)
const Caret = ({ w, off }: { w: string; off?: boolean }) => (
  <div className={`${w} shrink-0 flex justify-center`}>
    <div className={`w-0 h-0 border-x-[4px] border-t-[6px] border-x-transparent ${off ? 'border-t-[#c4c2bc]' : 'border-t-[#333]'}`} />
  </div>
)

function ToolRow({ children, push }: { children: ReactNode; push?: string }) {
  return (
    <div className={`h-[71px] flex items-center shrink-0 border-b-2 border-[#c6c4bf] bg-gradient-to-b from-[#f7f5f0] to-[#eeebe6] ${push ?? ''}`}>
      {children}
    </div>
  )
}

const SelectIcon = () => (
  <svg viewBox="0 0 48 48" width="48" height="48" className="shrink-0">
    <rect x="2" y="3" width="42" height="38" fill="#e4e3e0" stroke="#333" strokeWidth="2" strokeDasharray="3 2" />
    <rect x="3" y="4" width="28" height="34" fill="#f4d94a" stroke="#b79a2c" strokeWidth="2" />
    <path d="M27 16V42L33 36L38 46L43 44L38 34H46Z" fill="#fff" stroke="#222" strokeWidth="1.8" />
  </svg>
)

const menus = ['Project', 'Edit', 'View', 'Layer', 'Settings', 'Plugins', 'Vector', 'Raster', 'Database', 'Web', 'Mesh', 'Processing', 'Help']
const mnemonic: Record<string, number> = { Vector: 4, Processing: 3 }

const browserFiles = ['AmpumaRaja.shp', 'HallintoAlue.shp', 'HallintoalueRaja.shp', 'KarttanimiPiste1000.sh', 'KarttanimiPiste500.shp', 'KorkeusAlue.shp', 'KorkeusViiva1000.shp', 'KorkeusViiva500.shp', 'LentokenttaPiste.shp', 'LiikenneAlue.shp']

const layers: { name: string; kind: 'line' | 'box' | 'dot'; color: string }[] = [
  { name: 'AmpumaRaja', kind: 'line', color: '#b4685c' },
  { name: 'HallintoAlue', kind: 'box', color: '#b5484c' },
  { name: 'HallintoalueRaja', kind: 'line', color: '#f29a1e' },
  { name: 'KarttanimiPiste1000', kind: 'dot', color: '#e9708f' },
  { name: 'KarttanimiPiste500', kind: 'dot', color: '#86589a' },
  { name: 'KorkeusAlue', kind: 'box', color: '#f2a3b3' },
  { name: 'KorkeusViiva1000', kind: 'line', color: '#6f9a6c' },
  { name: 'KorkeusViiva500', kind: 'line', color: '#d9b13a' },
  { name: 'LentokenttaPiste', kind: 'dot', color: '#a0705a' },
  { name: 'LiikenneAlue', kind: 'box', color: '#84b572' },
]

const DockButtons = () => (
  <div className="flex gap-[5px] mr-[14px]">
    <svg viewBox="0 0 11 11" width="11" height="11"><rect x=".5" y=".5" width="10" height="10" rx="1.5" fill="none" stroke="#666" /><rect x="3.5" y="2.5" width="5" height="4" fill="none" stroke="#666" /><rect x="2.5" y="4.5" width="5" height="4" fill="#eee" stroke="#666" /></svg>
    <svg viewBox="0 0 11 11" width="11" height="11"><rect x=".5" y=".5" width="10" height="10" rx="1.5" fill="none" stroke="#666" /><path d="M3 3l5 5M8 3l-5 5" stroke="#444" strokeWidth="1.4" /></svg>
  </div>
)

const ScrollButton = ({ dir, className = '' }: { dir: 'up' | 'down' | 'left' | 'right'; className?: string }) => (
  <div className={`flex items-center justify-center bg-[#f0eeea] ${className}`}>
    {dir === 'up' && <div className="w-0 h-0 border-x-[4px] border-b-[5px] border-x-transparent border-b-[#555]" />}
    {dir === 'down' && <div className="w-0 h-0 border-x-[4px] border-t-[5px] border-x-transparent border-t-[#555]" />}
    {dir === 'left' && <div className="w-0 h-0 border-y-[4px] border-r-[5px] border-y-transparent border-r-[#333]" />}
    {dir === 'right' && <div className="w-0 h-0 border-y-[4px] border-l-[5px] border-y-transparent border-l-[#333]" />}
  </div>
)

const ShapeFile = () => (
  <svg viewBox="0 0 32 22" width="32" height="22" className="shrink-0">
    <defs><linearGradient id="shp" x1="0" y1="0" x2="0" y2="1"><stop offset="0" stopColor="#f4f9fd" /><stop offset="1" stopColor="#a9cbe8" /></linearGradient></defs>
    <path d="M2 10C1 3 6 1 10 3C14 5 18 5 22 3C26 1 31 2 30 9C30 15 27 17 22 15C18 13 14 13 10 15C6 17 2 16 2 10Z" fill="url(#shp)" stroke="#2f5375" strokeWidth="2" />
  </svg>
)

const Arrow = () => <div className="w-0 h-0 border-x-[4px] border-t-[5px] border-x-transparent border-t-[#333]" />

function BrowserPanel() {
  return (
    <div className="h-[557px] shrink-0 flex flex-col">
      <div className="h-[40px] flex items-center justify-between leading-none"><span>Browser</span><DockButtons /></div>
      <div className="h-[53px] flex items-center gap-[12px] pl-[7px]">
        <svg viewBox="0 0 30 30" width="30" height="30"><rect x="1" y="2" width="22" height="20" fill="none" stroke="#888" strokeWidth="1.6" /><rect x="16" y="15" width="13" height="13" rx="2" fill="#5d9a68" /><path d="M22.5 17.5v8M18.5 21.5h8" stroke="#fff" strokeWidth="2" /></svg>
        <svg viewBox="0 0 30 30" width="30" height="30"><path d="M2 15C2 6 12 1 22 4L26 1L29 13L16 12L20 9C14 8 9 10 9 15Z" fill="#5e8fc0" stroke="#3d6690" /><path d="M28 16C28 25 18 30 8 27L4 30L1 18L14 19L10 22C16 23 21 21 21 16Z" fill="#6f9dcb" stroke="#3d6690" /></svg>
        <svg viewBox="0 0 30 30" width="30" height="30"><path d="M1 3H29V8L18 18V29L12 25V18L1 8Z" fill="#6f9dcb" stroke="#3d6690" /><path d="M1 3H29V7H1Z" fill="#f2da4a" /></svg>
        <svg viewBox="0 0 30 30" width="30" height="30"><path d="M2 4V26M2 8H10M2 22H10" stroke="#888" strokeWidth="1.6" fill="none" /><rect x="7" y="7" width="5" height="5" fill="#f39b22" /><rect x="7" y="20" width="5" height="5" fill="#f39b22" /><path d="M20 2L29 12H24V26H16V12H11Z" fill="#5e8fc0" stroke="#3d6690" /></svg>
        <svg viewBox="0 0 30 30" width="30" height="30"><circle cx="15" cy="15" r="13" fill="#6b97c4" stroke="#3d6690" strokeWidth="1.5" /><text x="14.5" y="22" textAnchor="middle" fontFamily="Liberation Serif" fontStyle="italic" fontWeight="700" fontSize="20" fill="#fff">i</text></svg>
      </div>
      <div className="flex w-[503px] h-[463px] border border-[#b8b6b1] border-r-0 border-l-0">
        <div className="w-[475px] flex flex-col">
          <div className="flex-1 bg-white overflow-hidden">
            <div className="h-[36px] flex items-center">
              <div className="w-[51px] flex justify-center"><Arrow /></div>
              <svg viewBox="0 0 30 28" width="30" height="28"><path d="M1 3H11L14 6H29V27H1Z" fill="#f0efeb" stroke="#777" strokeWidth="1.6" /><path d="M1 3H11L14 6H29V9H14L11 7H1Z" fill="#999" /></svg>
              <span className="ml-[8px] mt-[2px]">data</span>
            </div>
            <div className="h-[36px] flex items-center whitespace-nowrap overflow-hidden">
              <div className="w-[92px] shrink-0 pl-[58px] pr-[4px] flex justify-center"><Arrow /></div>
              <svg viewBox="0 0 28 26" width="28" height="26" className="shrink-0"><rect x="1" y="1" width="26" height="24" fill="#eee" stroke="#777" strokeWidth="1.6" /><path d="M11 1V25M16 1V25" stroke="#777" /><path d="M13.5 3v8" stroke="#333" strokeWidth="3" strokeDasharray="2 1" /><circle cx="13.5" cy="19" r="3" fill="#fff" stroke="#333" strokeWidth="1.6" /></svg>
              <span className="ml-[8px] mt-[2px]">1_milj_Shape_etrs_shape.z</span>
            </div>
            {browserFiles.map(f => (
              <div key={f} className="h-[36px] flex items-center bg-[#2f8ac6] text-white pl-[130px] whitespace-nowrap overflow-hidden">
                <ShapeFile />
                <span className={`ml-[3px] pl-[2px] h-[34px] leading-[35px] ${f === 'KorkeusViiva500.shp' ? 'border-y border-l border-[#2b77ac] w-full' : ''}`}>{f}</span>
              </div>
            ))}
          </div>
          <div className="h-[28px] flex bg-[#e4e2de]">
            <ScrollButton dir="left" className="w-[22px]" />
            <div className="w-[75px]" />
            <div className="w-[328px] bg-gradient-to-b from-[#fafaf8] to-[#f0eeea] border-x border-[#d2d0cb]" />
            <div className="w-[22px]" />
            <ScrollButton dir="right" className="w-[28px]" />
          </div>
        </div>
        <div className="w-[28px] flex flex-col bg-[#e4e2de] border-l border-[#d2d0cb]">
          <ScrollButton dir="up" className="h-[29px] border-b border-[#d2d0cb]" />
          <div className="h-[78px]" />
          <div className="h-[68px] bg-gradient-to-r from-[#fafaf8] to-[#f0eeea] border-y border-[#d2d0cb]" />
          <div className="flex-1" />
          <ScrollButton dir="down" className="h-[56px] items-start pt-[18px] border-t border-[#d2d0cb]" />
        </div>
      </div>
    </div>
  )
}

function LayersPanel() {
  return (
    <div className="flex-1 flex flex-col">
      <div className="h-[49px] flex items-center justify-between pt-[14px] leading-none"><span>Layers</span><DockButtons /></div>
      <div className="h-[56px] flex items-center gap-[12px] pl-[7px] pt-[2px]">
        <svg viewBox="0 0 30 30" width="30" height="30"><path d="M1 20L13 10L23 22L14 28Z" fill="#d44" /><path d="M4 14L13 10L20 18L8 22Z" fill="#4a7ec0" /><path d="M7 9L13 5L21 17L15 21Z" fill="#f2da4a" /><path d="M17 14L28 3" stroke="#c98e43" strokeWidth="4" /></svg>
        <svg viewBox="0 0 30 30" width="30" height="30"><path d="M1 9H20V25H1Z" fill="none" stroke="#888" strokeWidth="1.6" /><rect x="5" y="5" width="16" height="16" fill="#fff" stroke="#888" strokeWidth="1.6" /><path d="M14 2V18" stroke="#3d6690" strokeWidth="2" /><rect x="16" y="16" width="13" height="13" rx="2" fill="#5d9a68" /><path d="M22.5 18v9M18 22.5h9" stroke="#fff" strokeWidth="2" /></svg>
        <svg viewBox="0 0 32 24" width="30" height="24"><path d="M1 11C8 2 24 2 31 12C24 20 8 20 1 11Z" fill="#fff" stroke="#888" strokeWidth="1.6" /><circle cx="16" cy="11" r="6" fill="#5e8fc0" stroke="#345" /><circle cx="16" cy="10" r="2.4" fill="#123" /></svg>
        <svg viewBox="0 0 30 30" width="30" height="30"><path d="M1 3H29V8L18 18V29L12 25V18L1 8Z" fill="#6f9dcb" stroke="#3d6690" /><path d="M1 3H29V7H1Z" fill="#f2da4a" /></svg>
        <svg viewBox="0 0 32 32" width="30" height="32"><text x="0" y="21" fontFamily="Liberation Serif" fontSize="34" fill="#5a2d7a">ε</text><path d="M14 19H30V23L25 26V32H19V26L14 23Z" fill="#b5b5b0" /></svg>
        <div className="-ml-[2px] w-0 h-0 border-x-[4px] border-t-[5px] border-x-transparent border-t-[#333]" />
        <svg viewBox="0 0 30 30" width="30" height="30" className="ml-[9px]"><path d="M2 3V26M2 7H10M2 21H10" stroke="#888" strokeWidth="1.6" fill="none" /><rect x="7" y="5" width="5" height="5" fill="#f39b22" /><rect x="7" y="19" width="5" height="5" fill="#f39b22" /><path d="M20 28L29 18H24V3H16V18H11Z" fill="#5e8fc0" stroke="#3d6690" /></svg>
        <svg viewBox="0 0 30 30" width="30" height="30"><path d="M2 4V26M2 8H10M2 22H10" stroke="#888" strokeWidth="1.6" fill="none" /><rect x="7" y="7" width="5" height="5" fill="#f39b22" /><rect x="7" y="20" width="5" height="5" fill="#f39b22" /><path d="M20 2L29 12H24V26H16V12H11Z" fill="#5e8fc0" stroke="#3d6690" /></svg>
        <svg viewBox="0 0 30 30" width="30" height="30"><rect x="1" y="2" width="22" height="22" fill="none" stroke="#888" strokeWidth="1.6" /><rect x="17" y="18" width="12" height="9" rx="2" fill="#e8505b" /><path d="M20 22.5h6" stroke="#fff" strokeWidth="2" /></svg>
      </div>
      <div className="flex w-[503px] flex-1 border-y border-[#b8b6b1]">
        <div className="w-[475px] bg-white overflow-hidden font-bold">
          {layers.map((l, i) => (
            <div key={l.name} className={`h-[36px] flex items-center pl-[38px] relative ${i === 0 ? 'bg-[#2f8ac6] text-white' : 'text-black'}`}>
              <div className="w-[28px] h-[28px] bg-white border border-[#a9a7a2] flex items-center justify-center shrink-0">
                <svg viewBox="0 0 20 22" width="20" height="22"><path d="M3 11L8 20L17 2" fill="none" stroke="#000" strokeWidth="2.6" /></svg>
              </div>
              <div className="w-[26px] h-[26px] ml-[6px] flex items-center justify-center shrink-0">
                {l.kind === 'line' && <div className="w-[26px] h-[2px]" style={{ background: l.color }} />}
                {l.kind === 'box' && <div className="w-[26px] h-[26px] border border-[#222]" style={{ background: l.color }} />}
                {l.kind === 'dot' && <div className="w-[16px] h-[16px] rounded-full border border-[#444]" style={{ background: l.color }} />}
              </div>
              <span className={`${l.kind === 'dot' ? 'ml-[8px]' : 'ml-[6px]'} whitespace-nowrap ${i === 0 ? 'border-b-2 border-white h-[36px] leading-[37px] tracking-[-0.3px]' : 'mt-[2px]'}`}>{l.name}</span>
              <div className={`absolute right-[1px] top-[3px] h-[30px] w-[7px] ${i === 0 ? 'bg-[#dfe8ee]' : 'bg-[#ebe9e6]'}`} />
            </div>
          ))}
        </div>
        <div className="w-[28px] flex flex-col bg-[#e0dedb] border-l border-[#d2d0cb]">
          <ScrollButton dir="up" className="h-[27px] border-b border-[#d2d0cb]" />
          <div className="h-[121px] bg-gradient-to-r from-[#fafaf8] to-[#f0eeea] border-b border-[#d2d0cb]" />
          <div className="flex-1" />
          <ScrollButton dir="down" className="h-[28px] border-t border-[#d2d0cb]" />
        </div>
      </div>
    </div>
  )
}

function SpinBox({ value, w }: { value: string; w: string }) {
  return (
    <div className={`${w} h-[44px] bg-white border border-[#c0beb9] flex text-[24px] rounded-[2px]`}>
      <span className="flex-1 pl-[6px] leading-[46px] whitespace-nowrap overflow-hidden">{value}</span>
      <div className="w-[27px] border-l border-[#d0cec9] flex flex-col justify-between py-[8px] items-center">
        <div className="w-0 h-0 border-x-[4px] border-b-[5px] border-x-transparent border-b-[#666]" />
        <div className="w-0 h-0 border-x-[4px] border-t-[5px] border-x-transparent border-t-[#666]" />
      </div>
    </div>
  )
}

function StatusBar() {
  return (
    <div className="h-[49px] shrink-0 flex items-center bg-[#efebe6] text-[24px] leading-[28px] border-t-2 border-[#d0cec9] relative whitespace-nowrap">
      <div className="w-[526px] h-[40px] mt-[5px] bg-white border border-[#bdbbb6] border-l-0 flex items-center text-[#8b8b8b] text-[27px] shrink-0">
        <Search size={28} strokeWidth={2} className="ml-[13px] text-[#8b8b8b] scale-x-[-1]" />
        <span className="ml-[6px]">Type to locate (Ctrl+K)</span>
      </div>
      <span className="ml-[359px] w-[122px] mt-[4px]">Coordinate</span>
      <div className="w-[210px] h-[35px] ml-[5px] bg-white border border-[#c0beb9] rounded-[2px] pl-[8px] leading-[36px] shrink-0">-343784,6706530</div>
      <svg viewBox="0 0 28 36" width="28" height="36" className="ml-[6px] shrink-0"><path d="M6 3L20 32" stroke="#222" strokeWidth="5" /><path d="M22 3L8 32" stroke="#bbb" strokeWidth="4" /><ellipse cx="13" cy="12" rx="7" ry="10" fill="none" stroke="#222" strokeWidth="2.6" /><ellipse cx="14" cy="27" rx="6" ry="7" fill="#fff" stroke="#222" strokeWidth="2.6" /></svg>
      <span className="ml-[15px] w-[56px] mt-[4px]">Scale</span>
      <div className="w-[175px] h-[41px] ml-[4px] bg-white border border-[#c0beb9] rounded-[2px] flex shrink-0">
        <span className="flex-1 pl-[6px] leading-[42px]">1:9310539</span>
        <div className="w-[20px] border-l border-[#d0cec9] flex items-center justify-center"><div className="w-0 h-0 border-x-[3px] border-t-[5px] border-x-transparent border-t-[#555]" /></div>
      </div>
      <svg viewBox="0 0 24 36" width="24" height="36" className="ml-[15px] shrink-0"><path d="M6 16V9C6 3 18 3 18 9V16" fill="none" stroke="#9a9a98" strokeWidth="2.6" /><rect x="3" y="15" width="18" height="18" rx="2" fill="#6a6a68" /></svg>
      <span className="ml-[11px] w-[104px] mt-[4px]">Magnifier</span>
      <div className="ml-[4px]"><SpinBox value="100%" w="w-[140px]" /></div>
      <span className="ml-[12px] w-[94px] mt-[4px]">Rotation</span>
      <div className="ml-[11px]"><SpinBox value="0,0 °" w="w-[136px]" /></div>
      <div className="w-[27px] h-[27px] ml-[7px] bg-white border border-[#a9a7a2] flex items-center justify-center shrink-0">
        <svg viewBox="0 0 20 22" width="20" height="22"><path d="M3 11L8 20L17 2" fill="none" stroke="#000" strokeWidth="2.6" /></svg>
      </div>
      <span className="ml-[13px] w-[78px] mt-[4px]">Render</span>
      <svg viewBox="0 0 26 26" width="26" height="26" className="ml-[19px] shrink-0"><circle cx="13" cy="13" r="11" fill="#ddd" stroke="#666" /><path d="M13 2V24M2 13H24M4 7C9 10 17 10 22 7M4 19C9 16 17 16 22 19M13 2C6 8 6 18 13 24M13 2C20 8 20 18 13 24" fill="none" stroke="#555" /></svg>
      <span className="ml-[6px] w-[118px] mt-[4px]">EPSG:3047</span>
      <svg viewBox="0 0 30 30" width="30" height="30" className="ml-[32px] shrink-0"><path d="M15 2C7 2 2 7 2 14C2 21 7 25 15 25L26 29L24 23C27 21 28 18 28 14C28 7 23 2 15 2Z" fill="#666" /><circle cx="9" cy="14" r="2" fill="#fff" /><circle cx="15" cy="14" r="2" fill="#fff" /><circle cx="21" cy="14" r="2" fill="#fff" /></svg>
    </div>
  )
}

export default function App() {
  return (
    <div className="w-[2420px] h-[1384px] overflow-hidden flex flex-col bg-[#efebe6] text-black text-[28px] [font-family:'Noto_Sans',sans-serif]">
      <div className="h-[61px] shrink-0 flex items-center justify-center relative bg-gradient-to-b from-[#3b3a36] to-[#4c4b46] text-[#dfdbd2] font-bold text-[29px] pt-[3px] pr-[8px] leading-none">
        *Untitled Project - QGIS b0e71a822e
        <div className="absolute right-[10px] top-[16px] flex gap-[9px]">
          <div className="w-[31px] h-[32px] rounded-full bg-[#6c6b66] border border-[#45443f] flex items-center justify-center"><div className="w-[14px] h-[3px] bg-[#3b3a36]" /></div>
          <div className="w-[31px] h-[32px] rounded-full bg-[#6c6b66] border border-[#45443f] flex items-center justify-center"><div className="w-[12px] h-[12px] border-2 border-[#3b3a36]" /></div>
          <div className="w-[31px] h-[32px] rounded-full bg-[#e0552a] border border-[#8a3a1e] flex items-center justify-center text-[#5c2410] text-[18px] leading-none">×</div>
        </div>
      </div>
      <div className="h-[38px] shrink-0 flex items-center pl-[11px] gap-[20px] bg-[#efebe6] border-b-2 border-[#d3d1cc] leading-none tracking-[0.3px]">
        {menus.map(m => {
          const i = mnemonic[m] ?? 0
          return <span key={m}>{m.slice(0, i)}<span className="underline decoration-2 underline-offset-[4px] [text-decoration-skip-ink:none]">{m[i]}</span>{m.slice(i + 1)}</span>
        })}
      </div>

      <ToolRow push="pt-[2px]">
        <div className="w-[19px] shrink-0 flex justify-center"><div className="w-[3px] h-[30px] border-l-2 border-dotted border-[#bdbab4]" /></div>
        {iconsTop.map((ic, i) => <Slot key={i}>{ic}</Slot>)}
        <Grip w="w-[32px]" />
        <Slot>
          <div className="w-[55px] h-[54px] -my-[5px] shrink-0 flex items-center justify-center bg-[#dcd9d4] border border-[#aaa8a3] rounded-[2px]">
            <svg viewBox="0 0 36 48" width="36" height="48">
              <path d="M11 46C9 40 5 34 2 27C0 22 5 20 8 24L11 29V8C11 4 15 4 15 8V21V3C15 -1 20 -1 20 3V21V6C20 2 25 2 25 6V22V11C25 8 30 8 30 11V30C30 36 28 40 27 46Z" fill="#fff" stroke="#000" strokeWidth="1.9" strokeLinejoin="round" />
              <path d="M11 45H27" stroke="#000" strokeWidth="3" />
            </svg>
          </div>
        </Slot>
        {iconsNav.map((ic, i) => <Slot key={i}>{ic}</Slot>)}
        <Grip w="w-[29px]" />
        {iconsAttr.slice(0, 6).map((ic, i) => <Slot key={i} wide>{ic}</Slot>)}
        <Caret w="w-[20px]" />
        <Slot wide>{iconsAttr[6]}</Slot>
        <Slot wide>{iconsAttr[7]}</Slot>
        <Caret w="w-[21px]" off />
        <Slot wide>
          <Ico><path d="M6 2H40V28H20L8 42L12 28H6Z" fill="#eaf0f2" stroke="#888" strokeWidth="2" /><path d="M14 7H32V11M23 7V24M19 24H27" fill="none" stroke="#333" strokeWidth="2.4" /></Ico>
        </Slot>
        <Caret w="w-[24px]" />
      </ToolRow>

      <ToolRow>
        <div className="w-[19px] shrink-0 flex justify-center"><div className="w-[3px] h-[30px] border-l-2 border-dotted border-[#bdbab4]" /></div>
        {iconsLeft.map((ic, i) => <Slot key={i}>{ic}</Slot>)}
        <Sep w="w-[14px]" />
        <Slot><Ico><rect x="4" y="1" width="36" height="42" rx="3" fill="#a9c3de" stroke="#2e5273" strokeWidth="2" /><Nodes /><Star x={25} y={24} /></Ico></Slot>
        <Sep w="w-[16px]" />
        <Grip w="w-[30px]" />
        {iconsEdit.map((ic, i) => <Slot key={i}>{ic}</Slot>)}
        <Slot><Ico off><path d="M10 2h8v8h-8zM8 40L14 10M16 6H34" fill="none" stroke="#555" strokeWidth="2" /><path d="M22 20L38 40L32 44L18 26ZM34 16L20 40L26 42L40 20Z" fill="#a8a89a" stroke="#666" /></Ico></Slot>
        <Caret w="w-[22px]" off />
        {iconsEdit2.map((ic, i) => <Slot key={i}>{ic}</Slot>)}
        <Grip w="w-[32px]" />
        {iconsLabel.map((ic, i) => <Slot key={i}>{ic}</Slot>)}
        <Sep w="w-[13px]" />
        {iconsLabel2.map((ic, i) => <Slot key={i}>{ic}</Slot>)}
        <Sep w="w-[16px]" />
        {iconsLabelOff.map((ic, i) => <Slot key={i}>{ic}</Slot>)}
        <Grip w="w-[33px]" />
        <Slot><GlobeBin /></Slot>
        <Grip w="w-[33px]" />
        <Slot><Python /></Slot>
        <Grip w="w-[32px]" />
        <Slot><HelpBook /></Slot>
        <Grip w="w-[46px]" />
      </ToolRow>

      <ToolRow push="pt-[4px]">
        <div className="w-[19px] shrink-0 flex justify-center"><div className="w-[3px] h-[30px] border-l-2 border-dotted border-[#bdbab4]" /></div>
        <div className="w-[59px] shrink-0 flex justify-center">
          <svg viewBox="0 0 26 30" width="26" height="30"><circle cx="12" cy="11" r="9" fill="#1ab8d6" stroke="#222" strokeWidth="3" /><circle cx="12" cy="11" r="2.5" fill="#111" /><path d="M17 19L24 28" stroke="#333" strokeWidth="3" /></svg>
        </div>
        <div className="w-[243px] h-[42px] shrink-0 border border-[#b5b3ae] rounded-[3px] bg-gradient-to-b from-[#fbfaf8] to-[#efede9] flex items-center justify-end pr-[6px]">
          <div className="w-0 h-0 border-x-[3px] border-t-[5px] border-x-transparent border-t-[#444]" />
        </div>
        <div className="w-[261px] h-[42px] ml-[3px] shrink-0 bg-white border border-[#b5b3ae] rounded-[3px] pl-[2px] leading-[38px] text-[#6d6d6d] text-[27px]">Search for...</div>
        <Grip w="w-[38px]" />
        <svg viewBox="0 0 48 48" width="48" height="48" className="shrink-0">
          <defs><linearGradient id="gr" x1="0" y1="0" x2="1" y2="1"><stop offset="0" stopColor="#5f9a4c" /><stop offset="1" stopColor="#9fd37e" /></linearGradient></defs>
          <rect width="48" height="48" fill="url(#gr)" />
          <circle cx="27" cy="19" r="14" fill="none" stroke="#fff" strokeWidth="4" />
          <path d="M17 30L6 43" stroke="#fff" strokeWidth="6" />
        </svg>
        <div className="w-[68px] shrink-0 flex justify-center">
          <Ico><path d="M2 6L16 2V40L2 36Z" fill="#5aa55a" /><path d="M16 2H30L38 20L30 42H16Z" fill="#f0d070" /><path d="M20 10L30 16L24 28Z" fill="#e08a8a" /><path d="M14 36L30 28L38 42H20Z" fill="#4f83d8" /><path d="M26 22L38 2L42 4L30 26Z" fill="#7a3a1a" /><path d="M22 30L28 22L32 26Z" fill="#222" /></Ico>
        </div>
        <Grip w="w-[32px]" />
        <SelectIcon />
        <Caret w="w-[30px]" />
        <div className="w-[58px] shrink-0 flex justify-center">
          <Ico><rect x="13" y="20" width="28" height="22" fill="#f4d94a" stroke="#b79a2c" strokeWidth="2" /><rect x="3" y="3" width="26" height="28" fill="#dcdcd8" stroke="#777" strokeWidth="2.4" /><path d="M8 11H24V16H8ZM8 20H24V25H8Z" fill="#fff" stroke="#777" strokeWidth="1.6" /></Ico>
        </div>
        <Caret w="w-[24px]" />
        <div className="w-[58px] shrink-0 flex justify-center">
          <Ico><rect x="1" y="2" width="26" height="28" fill="#f4d94a" stroke="#b79a2c" strokeWidth="2" /><rect x="8" y="11" width="26" height="28" fill="#f4d94a" stroke="#b79a2c" strokeWidth="2" /><rect x="24" y="24" width="20" height="20" rx="2" fill="#e21c1c" /><circle cx="34" cy="34" r="7" fill="none" stroke="#fff" strokeWidth="2.6" /><path d="M29 39L39 29" stroke="#fff" strokeWidth="2.6" /></Ico>
        </div>
        <Caret w="w-[18px]" />
      </ToolRow>

      <div className="flex-1 min-h-0 flex">
        <div className="w-[515px] shrink-0 flex flex-col">
          <BrowserPanel />
          <LayersPanel />
        </div>
        <div className="flex-1 bg-white border-l-2 border-t-2 border-r-2 border-[#c4c2bd]">
          <FinlandMap />
        </div>
      </div>
      <StatusBar />
    </div>
  )
}
